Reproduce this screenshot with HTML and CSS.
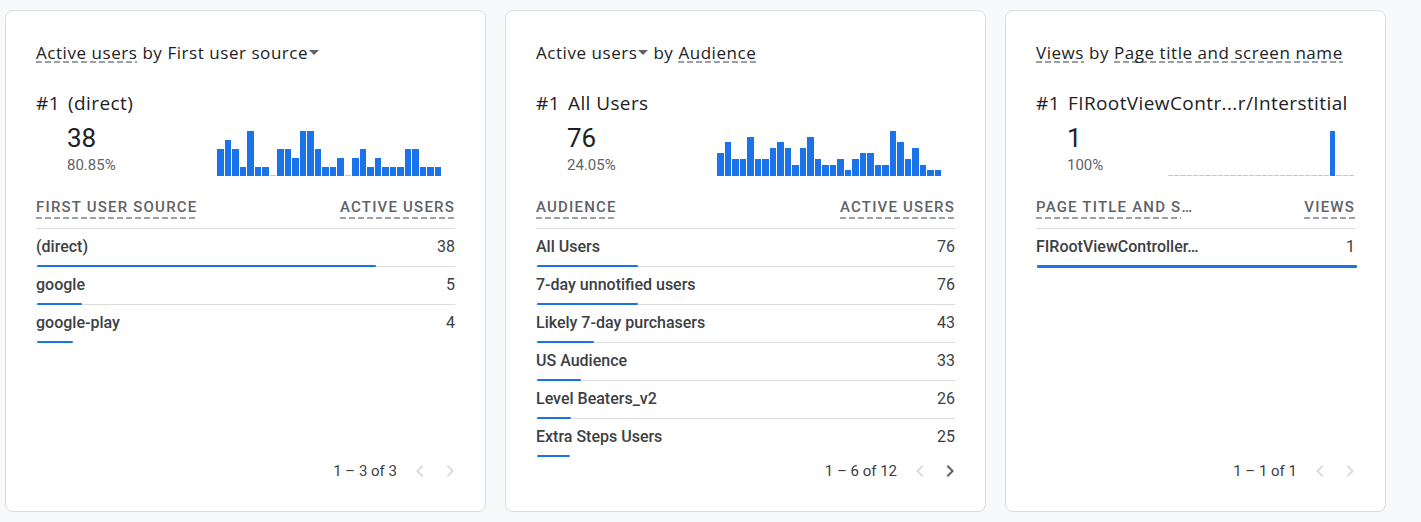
FILE: index.html
```html
<!DOCTYPE html>
<html>
<head>
<meta charset="utf-8">
<link rel="stylesheet" href="styles.css">
</head>
<body>
<div class="page">

  <section class="card">
    <h2 class="card-title"><span class="dim">Active users</span> by <span class="pick">First user source<svg class="caret" viewBox="0 0 10 5" width="10" height="5"><path d="M0 0h10L5 5z"/></svg></span></h2>
    <div class="rank"><span class="rank-num">#1</span><span class="rank-name">(direct)</span></div>
    <div class="stat">
      <div class="stat-values"><div class="stat-value">38</div><div class="stat-pct">80.85%</div></div>
      <div class="spark">
        <span class="bar" style="height:27px"></span><span class="bar" style="height:36px"></span><span class="bar" style="height:27px"></span><span class="bar" style="height:9px"></span><span class="bar" style="height:45px"></span><span class="bar" style="height:9px"></span><span class="bar" style="height:9px"></span><span class="bar zero"></span><span class="bar" style="height:27px"></span><span class="bar" style="height:27px"></span><span class="bar" style="height:18px"></span><span class="bar" style="height:45px"></span><span class="bar" style="height:45px"></span><span class="bar" style="height:27px"></span><span class="bar" style="height:9px"></span><span class="bar" style="height:9px"></span><span class="bar" style="height:18px"></span><span class="bar zero"></span><span class="bar" style="height:18px"></span><span class="bar" style="height:27px"></span><span class="bar" style="height:9px"></span><span class="bar" style="height:18px"></span><span class="bar" style="height:9px"></span><span class="bar" style="height:9px"></span><span class="bar" style="height:9px"></span><span class="bar" style="height:27px"></span><span class="bar" style="height:27px"></span><span class="bar" style="height:9px"></span><span class="bar" style="height:9px"></span><span class="bar" style="height:9px"></span>
      </div>
    </div>
    <div class="table">
      <div class="thead"><span class="th">First user source</span><span class="th">Active users</span></div>
      <div class="row"><div class="row-line"><span class="row-label">(direct)</span><span class="row-value">38</span></div><div class="row-bar" style="width:80.85%"></div></div>
      <div class="row"><div class="row-line"><span class="row-label">google</span><span class="row-value">5</span></div><div class="row-bar" style="width:10.64%"></div></div>
      <div class="row last"><div class="row-line"><span class="row-label">google-play</span><span class="row-value">4</span></div><div class="row-bar" style="width:8.51%"></div></div>
    </div>
    <div class="pager">
      <span class="pager-text">1 – 3 of 3</span>
      <svg class="chev off" viewBox="0 0 24 24" width="24" height="24"><path d="M15.41 7.41L14 6l-6 6 6 6 1.41-1.41L10.83 12z"/></svg>
      <svg class="chev off" viewBox="0 0 24 24" width="24" height="24"><path d="M10 6L8.59 7.41 13.17 12l-4.58 4.59L10 18l6-6z"/></svg>
    </div>
  </section>

  <section class="card">
    <h2 class="card-title"><span class="pick">Active users<svg class="caret" viewBox="0 0 10 5" width="10" height="5"><path d="M0 0h10L5 5z"/></svg></span> by <span class="dim">Audience</span></h2>
    <div class="rank"><span class="rank-num">#1</span><span class="rank-name">All Users</span></div>
    <div class="stat">
      <div class="stat-values"><div class="stat-value">76</div><div class="stat-pct">24.05%</div></div>
      <div class="spark">
        <span class="bar" style="height:23px"></span><span class="bar" style="height:34px"></span><span class="bar" style="height:17px"></span><span class="bar" style="height:17px"></span><span class="bar" style="height:39px"></span><span class="bar" style="height:17px"></span><span class="bar" style="height:17px"></span><span class="bar" style="height:28px"></span><span class="bar" style="height:34px"></span><span class="bar" style="height:28px"></span><span class="bar" style="height:11px"></span><span class="bar" style="height:28px"></span><span class="bar" style="height:39px"></span><span class="bar" style="height:17px"></span><span class="bar" style="height:11px"></span><span class="bar" style="height:11px"></span><span class="bar" style="height:17px"></span><span class="bar" style="height:6px"></span><span class="bar" style="height:17px"></span><span class="bar" style="height:23px"></span><span class="bar" style="height:23px"></span><span class="bar" style="height:11px"></span><span class="bar" style="height:11px"></span><span class="bar" style="height:45px"></span><span class="bar" style="height:34px"></span><span class="bar" style="height:17px"></span><span class="bar" style="height:28px"></span><span class="bar" style="height:11px"></span><span class="bar" style="height:6px"></span><span class="bar" style="height:6px"></span>
      </div>
    </div>
    <div class="table">
      <div class="thead"><span class="th">Audience</span><span class="th">Active users</span></div>
      <div class="row"><div class="row-line"><span class="row-label">All Users</span><span class="row-value">76</span></div><div class="row-bar" style="width:24.05%"></div></div>
      <div class="row"><div class="row-line"><span class="row-label">7-day unnotified users</span><span class="row-value">76</span></div><div class="row-bar" style="width:24.05%"></div></div>
      <div class="row"><div class="row-line"><span class="row-label">Likely 7-day purchasers</span><span class="row-value">43</span></div><div class="row-bar" style="width:13.61%"></div></div>
      <div class="row"><div class="row-line"><span class="row-label">US Audience</span><span class="row-value">33</span></div><div class="row-bar" style="width:10.44%"></div></div>
      <div class="row"><div class="row-line"><span class="row-label">Level Beaters_v2</span><span class="row-value">26</span></div><div class="row-bar" style="width:8.23%"></div></div>
      <div class="row last"><div class="row-line"><span class="row-label">Extra Steps Users</span><span class="row-value">25</span></div><div class="row-bar" style="width:7.91%"></div></div>
    </div>
    <div class="pager">
      <span class="pager-text">1 – 6 of 12</span>
      <svg class="chev off" viewBox="0 0 24 24" width="24" height="24"><path d="M15.41 7.41L14 6l-6 6 6 6 1.41-1.41L10.83 12z"/></svg>
      <svg class="chev" viewBox="0 0 24 24" width="24" height="24"><path d="M10 6L8.59 7.41 13.17 12l-4.58 4.59L10 18l6-6z"/></svg>
    </div>
  </section>

  <section class="card card--narrow">
    <h2 class="card-title"><span class="dim">Views</span> by <span class="dim">Page title and screen name</span></h2>
    <div class="rank"><span class="rank-num">#1</span><span class="rank-name">FIRootViewContr...r/Interstitial</span></div>
    <div class="stat">
      <div class="stat-values"><div class="stat-value">1</div><div class="stat-pct">100%</div></div>
      <div class="spark spark--narrow">
        <span class="bar zero"></span><span class="bar zero"></span><span class="bar zero"></span><span class="bar zero"></span><span class="bar zero"></span><span class="bar zero"></span><span class="bar zero"></span><span class="bar zero"></span><span class="bar zero"></span><span class="bar zero"></span><span class="bar zero"></span><span class="bar zero"></span><span class="bar zero"></span><span class="bar zero"></span><span class="bar zero"></span><span class="bar zero"></span><span class="bar zero"></span><span class="bar zero"></span><span class="bar zero"></span><span class="bar zero"></span><span class="bar zero"></span><span class="bar zero"></span><span class="bar zero"></span><span class="bar zero"></span><span class="bar zero"></span><span class="bar zero"></span><span class="bar" style="height:45px"></span><span class="bar zero"></span><span class="bar zero"></span><span class="bar zero"></span>
      </div>
    </div>
    <div class="table">
      <div class="thead"><span class="th th-trunc">Page title and s<span class="ell">…</span></span><span class="th">Views</span></div>
      <div class="row last"><div class="row-line"><span class="row-label">FIRootViewController…</span><span class="row-value">1</span></div><div class="row-bar full" style="width:100%"></div></div>
    </div>
    <div class="pager">
      <span class="pager-text">1 – 1 of 1</span>
      <svg class="chev off" viewBox="0 0 24 24" width="24" height="24"><path d="M15.41 7.41L14 6l-6 6 6 6 1.41-1.41L10.83 12z"/></svg>
      <svg class="chev off" viewBox="0 0 24 24" width="24" height="24"><path d="M10 6L8.59 7.41 13.17 12l-4.58 4.59L10 18l6-6z"/></svg>
    </div>
  </section>

</div>
</body>
</html>
```

FILE: styles.css
```css
html, body {
  margin: 0;
  background: #f8f9fa;
}

body {
  font-family: Roboto, "Liberation Sans", sans-serif;
  color: #202124;
}

.page {
  display: flex;
  gap: 19px;
  padding: 10px 0 0 5px;
}

.card {
  box-sizing: border-box;
  width: 481px;
  height: 502px;
  background: #fff;
  border: 1px solid #dadce0;
  border-radius: 8px;
  padding: 30px 30px 30px;
  display: flex;
  flex-direction: column;
}

.card--narrow {
  width: 381px;
}

.card-title {
  margin: 0;
  font-family: "Open Sans", Roboto, sans-serif;
  font-weight: 400;
  font-size: 17px;
  letter-spacing: 0.55px;
  line-height: 24px;
  color: #202124;
  white-space: nowrap;
}

.dim {
  background: repeating-linear-gradient(90deg, #9aa0a6 0 6px, transparent 6px 9px) left 0 bottom 1px / 100% 2px no-repeat;
}

.pick {
  white-space: nowrap;
}

.caret {
  fill: #5f6368;
  vertical-align: 4px;
  margin-left: 1px;
}

.rank {
  margin-top: 24px;
  display: flex;
  font-family: "Open Sans", Roboto, sans-serif;
  font-size: 19px;
  letter-spacing: 0.4px;
  line-height: 28px;
  color: #202124;
  white-space: nowrap;
}

.rank-num {
  width: 32px;
}

.stat {
  margin-top: 5px;
  display: flex;
  align-items: flex-end;
}

.stat-values {
  padding-left: 31px;
}

.stat-value {
  font-family: Roboto, sans-serif;
  font-size: 26px;
  line-height: 32px;
  color: #202124;
}

.stat-pct {
  font-size: 15px;
  line-height: 22px;
  color: #5f6368;
}

.spark {
  margin-left: auto;
  margin-right: 14px;
  width: 224px;
  height: 45px;
  display: flex;
  align-items: flex-end;
  gap: 1px;
}

.spark--narrow {
  width: 186px;
  margin-right: 1px;
}

.bar {
  flex: 1;
  background: #1a73e8;
}

.bar.zero {
  height: 1px;
  background: #c4c7c5;
}

.table {
  margin-top: 21px;
}

.thead {
  height: 31px;
  display: flex;
  justify-content: space-between;
  align-items: flex-start;
  border-bottom: 1px solid #dadce0;
}

.th {
  font-size: 15px;
  font-weight: 500;
  line-height: 20px;
  letter-spacing: 1.2px;
  text-transform: uppercase;
  color: #5f6368;
  padding-bottom: 2px;
  background: repeating-linear-gradient(90deg, #9aa0a6 0 6px, transparent 6px 9px) left bottom / 100% 2px no-repeat;
}

.th-trunc {
  background-size: 145px 2px;
}

.row {
  padding-top: 8px;
  border-bottom: 1px solid #dadce0;
}

.row.last {
  border-bottom-color: transparent;
}

.row-line {
  display: flex;
  justify-content: space-between;
  font-size: 16px;
  line-height: 20px;
  color: #3c4043;
}

.row-label {
  font-weight: 500;
}

.row-bar {
  margin-top: 8px;
  margin-bottom: -1px;
  height: 2px;
  margin-left: 1px;
  background: #1a73e8;
  border-radius: 1px;
}

.row-bar.full {
  height: 3px;
  margin-left: 1px;
  margin-right: -2px;
  width: auto !important;
}

.pager {
  margin-top: auto;
  margin-right: -7px;
  display: flex;
  justify-content: flex-end;
  align-items: center;
  height: 20px;
  gap: 6px;
}

.pager-text {
  margin-right: 5px;
  font-size: 15px;
  line-height: 20px;
  color: #3c4043;
}

.chev {
  fill: #5f6368;
}

.chev.off {
  fill: #dadce0;
}
```
